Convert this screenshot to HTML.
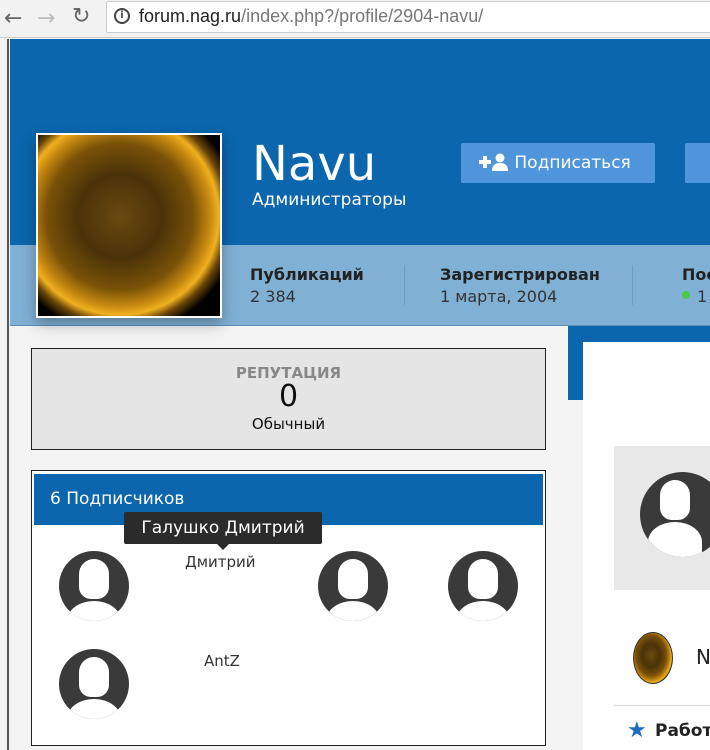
<!DOCTYPE html>
<html><head><meta charset="utf-8"><style>
*{margin:0;padding:0;box-sizing:border-box}
body{width:710px;height:750px;overflow:hidden;background:#f4f4f4;font-family:"DejaVu Sans","Liberation Sans",sans-serif;position:relative}
.a{position:absolute}
.sun{background:radial-gradient(ellipse at 45% 45%,#6a4a10 0%,#4a3208 30%,#7a5208 52%,#c88a10 64%,#f0b020 70%,#6a4508 76%,#000 84%)}
.av{position:absolute;width:70px;height:70px;border-radius:50%;overflow:hidden;background:#3a3a3a}
.av:before{content:"";position:absolute;left:20px;top:8px;width:30px;height:40px;border-radius:15px 15px 12px 12px;background:#fff}
.av:after{content:"";position:absolute;left:8px;top:50px;width:54px;height:40px;border-radius:50% 50% 0 0;background:#fff}
</style></head><body>
<div class="a" style="left:0;top:0;width:710px;height:38px;background:#f2f2f2;border-bottom:1px solid #ccc"></div>
<div class="a" style="left:4px;top:6px;font-size:22px;color:#666">←</div>
<div class="a" style="left:37px;top:6px;font-size:22px;color:#bbb">→</div>
<div class="a" style="left:72px;top:4px;font-size:22px;color:#666">↻</div>
<div class="a" style="left:106px;top:1px;width:610px;height:32px;background:#fff;border:1px solid #ccc;border-radius:2px"></div>
<div class="a" style="left:114px;top:8px;width:16px;height:16px;border:2px solid #444;border-radius:50%;font-size:10px;text-align:center;line-height:12px;font-weight:bold;color:#444">i</div>
<div class="a" style="left:139px;top:6px;font-size:18px;font-family:'Liberation Sans',sans-serif;color:#222">forum.nag.ru<span style="color:#777">/index.php?/profile/2904-navu/</span></div>
<div class="a" style="left:7px;top:39px;width:2px;height:711px;background:#555"></div>
<div class="a" style="left:10px;top:39px;width:700px;height:206px;background:#0b66ad"></div>
<div class="a" style="left:10px;top:245px;width:700px;height:81px;background:#80b0d4;border-bottom:1px solid #5a8fbb"></div>
<div class="a sun" style="left:36px;top:133px;width:186px;height:185px;border:2px solid #fff;box-shadow:0 6px 14px rgba(0,0,0,.3)"></div>
<div class="a" style="left:252px;top:136px;font-size:48px;color:#fff">Navu</div>
<div class="a" style="left:252px;top:190px;font-size:17px;color:#fff">Администраторы</div>
<div class="a" style="left:461px;top:143px;width:194px;height:40px;background:#4f95db;border-radius:2px;color:#fff;font-size:17px;line-height:40px;padding-left:18px"><svg width="30" height="18" viewBox="0 0 30 18" style="vertical-align:-3px"><path d="M6 3v12M0 9h12" stroke="#fff" stroke-width="4"/><circle cx="21" cy="5" r="4.5" fill="#fff"/><path d="M13 18c0-6 3-8 8-8s8 2 8 8z" fill="#fff"/></svg> Подписаться</div>
<div class="a" style="left:685px;top:143px;width:40px;height:40px;background:#4f95db;border-radius:2px"></div>
<div class="a" style="left:250px;top:265px;font-size:16px;font-weight:bold;color:#222">Публикаций</div>
<div class="a" style="left:250px;top:287px;font-size:16px;color:#333">2 384</div>
<div class="a" style="left:404px;top:265px;width:1px;height:40px;background:#6a9cc4"></div>
<div class="a" style="left:440px;top:265px;font-size:16px;font-weight:bold;color:#222">Зарегистрирован</div>
<div class="a" style="left:440px;top:287px;font-size:16px;color:#333">1 марта, 2004</div>
<div class="a" style="left:632px;top:265px;width:1px;height:40px;background:#6a9cc4"></div>
<div class="a" style="left:682px;top:265px;font-size:16px;font-weight:bold;color:#222">Пос</div>
<div class="a" style="left:682px;top:291px;width:8px;height:8px;border-radius:50%;background:#4c4"></div>
<div class="a" style="left:697px;top:287px;font-size:16px;color:#333">1</div>
<div class="a" style="left:568px;top:326px;width:142px;height:74px;background:#0b66ad"></div>
<div class="a" style="left:583px;top:342px;width:127px;height:408px;background:#fff"></div>
<div class="a" style="left:31px;top:348px;width:515px;height:102px;background:#e5e5e5;border:1px solid #222;text-align:center">
<div style="margin-top:15px;font-size:15px;font-weight:bold;color:#888">РЕПУТАЦИЯ</div>
<div style="font-size:30px;line-height:30px;color:#111">0</div>
<div style="font-size:15px;margin-top:3px;color:#111">Обычный</div></div>
<div class="a" style="left:31px;top:470px;width:515px;height:276px;background:#fff;border:1px solid #222"></div>
<div class="a" style="left:34px;top:474px;width:509px;height:51px;background:#0b66ad;color:#fff;font-size:17px;padding:15px 0 0 16px">6 Подписчиков</div>
<div class="av" style="left:59px;top:551px"></div>
<div class="av" style="left:318px;top:551px"></div>
<div class="av" style="left:448px;top:551px"></div>
<div class="av" style="left:59px;top:649px"></div>
<div class="a" style="left:185px;top:553px;font-size:15px;color:#333">Дмитрий</div>
<div class="a" style="left:204px;top:652px;font-size:15px;color:#333">AntZ</div>
<div class="a" style="left:124px;top:512px;width:198px;height:32px;background:#2b2b2b;border-radius:2px;color:#fff;font-size:17px;line-height:32px;text-align:center">Галушко Дмитрий</div>
<div class="a" style="left:217px;top:544px;border:6px solid transparent;border-top-color:#2b2b2b"></div>
<div class="a" style="left:614px;top:446px;width:96px;height:144px;background:#e8e8e8"></div>
<div class="av" style="left:640px;top:472px;width:85px;height:85px"></div>
<div class="a sun" style="left:633px;top:632px;width:40px;height:52px;border-radius:50%;border:1px solid #333"></div>
<div class="a" style="left:696px;top:645px;font-size:20px;color:#222">N</div>
<div class="a" style="left:614px;top:705px;width:96px;height:1px;background:#ddd"></div>
<div class="a" style="left:627px;top:718px;font-size:22px;color:#1a6fc0">★</div>
<div class="a" style="left:655px;top:721px;font-size:17px;font-weight:bold;color:#222">Работ</div>
</body></html>
